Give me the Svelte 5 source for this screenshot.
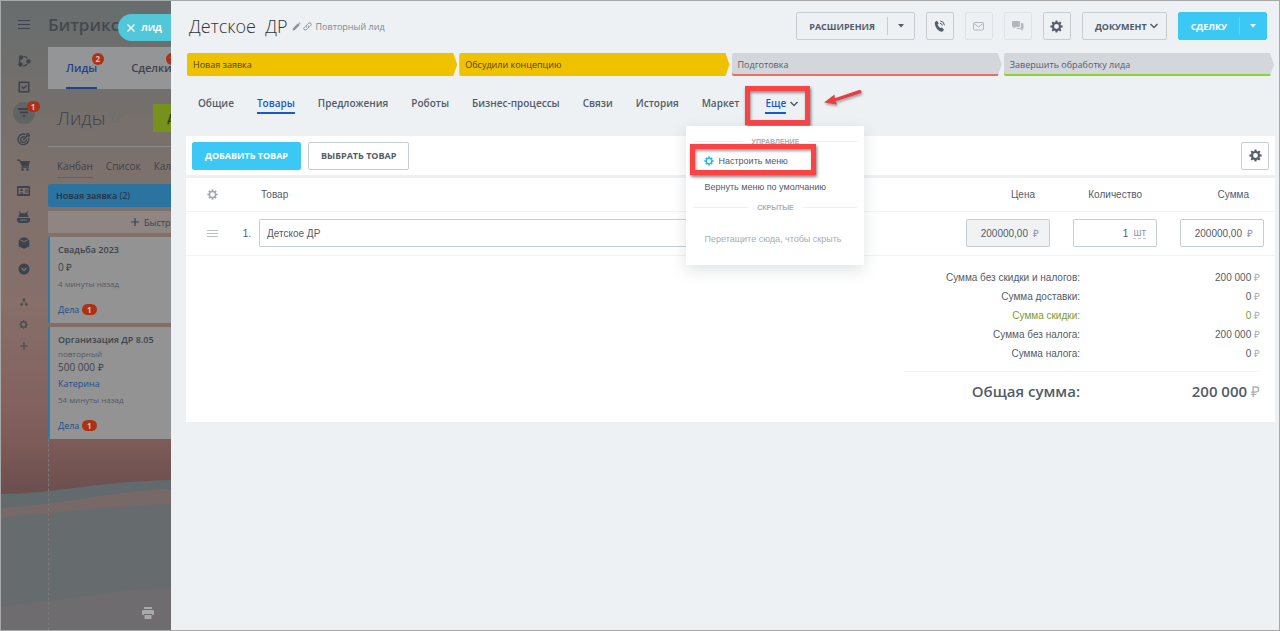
<script>
  const stages = [
    { name: 'Новая заявка', kind: 'done' },
    { name: 'Обсудили концепцию', kind: 'done' },
    { name: 'Подготовка', kind: 'fail' },
    { name: 'Завершить обработку лида', kind: 'success' }
  ];

  const tabs = ['Общие', 'Товары', 'Предложения', 'Роботы', 'Бизнес-процессы', 'Связи', 'История', 'Маркет'];
  let activeTab = $state('Товары');
  let menuOpen = $state(true);

  const totals = [
    { label: 'Сумма без скидки и налогов:', value: '200 000' },
    { label: 'Сумма доставки:', value: '0' },
    { label: 'Сумма скидки:', value: '0', discount: true },
    { label: 'Сумма без налога:', value: '200 000' },
    { label: 'Сумма налога:', value: '0' }
  ];

  let product = $state({ name: 'Детское ДР', price: '200000,00', quantity: '1', sum: '200000,00' });

  const teeth = [0, 45, 90, 135, 180, 225, 270, 315];
</script>

{#snippet gear(size, hole = 3)}
  <svg width={size} height={size} viewBox="0 0 16 16" fill="currentColor" aria-hidden="true">
    <path fill-rule="evenodd" d="M8 2.5a5.500 5.500 0 1 0 0 11a5.500 5.500 0 1 0 0-11zM8 {8 - hole}a{hole} {hole} 0 1 1 0 {hole * 2}a{hole} {hole} 0 1 1 0-{hole * 2}z" />
    {#each teeth as angle}
      <path d="M6.400 3.500L6.900 .5h2.200l.5 3z" transform="rotate({angle} 8 8)" />
    {/each}
  </svg>
{/snippet}

{#snippet chevron()}
  <svg width="10" height="8" viewBox="0 0 10 8" fill="none" stroke="currentColor" stroke-width="1.500" aria-hidden="true">
    <path d="M1.500 2L5 5.500L8.500 2" />
  </svg>
{/snippet}

{#snippet caret()}
  <svg width="6" height="4" viewBox="0 0 6 4" fill="currentColor" aria-hidden="true"><path d="M0 0h6L3 3.500z" /></svg>
{/snippet}

<div class="page">
  <aside class="behind">
    <svg class="dunes" viewBox="0 0 170 160" preserveAspectRatio="none" aria-hidden="true">
      <path fill="#626a6d" d="M0 24C50 24 100 11 170 10V160H0z" />
      <path fill="#776967" d="M0 38C60 35 110 21 170 19V42C110 42 60 43 0 48z" />
      <path fill="#666b6e" d="M0 48C50 43 100 37 170 34V160H0z" />
      <path fill="#6e6c6f" d="M0 137C60 130 110 121 170 117V160H0z" />
    </svg>

    <nav class="rail" aria-label="Главное меню">
      <button class="rail-item burger" aria-label="Меню">
        <svg width="14" height="12" viewBox="0 0 14 12" stroke="currentColor"><path d="M1 1.500h12M1 5.500h12M1 9.500h12" /></svg>
      </button>
      <button class="rail-item" aria-label="Совместная работа">
        <svg width="14" height="14" viewBox="0 0 14 14" fill="currentColor">
          <circle cx="4" cy="3.500" r="2.200" /><circle cx="3.500" cy="10.500" r="2.200" /><circle cx="11.500" cy="7.500" r="2.200" />
          <path fill="none" stroke="currentColor" stroke-width="1.200" d="M6.500 2.500Q9 2.300 10.500 4.500M2.500 5v4M6 12Q8.500 12 10.300 10" />
        </svg>
      </button>
      <button class="rail-item" aria-label="Задачи">
        <svg width="12" height="12" viewBox="0 0 12 12" fill="none" stroke="currentColor" stroke-width="1.600"><rect x="1.300" y="1.300" width="9.400" height="9.400" /><path d="M3.800 5.500l1.900 1.900l2.900-3.100" stroke-width="1.400" /></svg>
      </button>
      <button class="rail-item current" aria-label="CRM">
        <svg width="12" height="10" viewBox="0 0 12 10" fill="currentColor"><path d="M0 0h12v2H0zM2 3.500h8v2H2zM4 7h4L6 9.500z" /></svg>
        <span class="badge rail-badge">1</span>
      </button>
      <button class="rail-item" aria-label="Маркетинг">
        <svg width="13" height="13" viewBox="0 0 13 13" fill="none" stroke="currentColor" stroke-width="1.400"><path d="M8.500 1.500A5.300 5.300 0 1 0 11.500 5M7.500 4A2.800 2.800 0 1 0 9.200 6M6 7l4-4M10 3V1l2-.5M10 3h2l1-1.500" /></svg>
      </button>
      <button class="rail-item" aria-label="Магазин">
        <svg width="14" height="12" viewBox="0 0 14 12" fill="currentColor"><path d="M0 .5h3L3.600 2H13l-1.500 5.500H5L2.200 1.700H0z" /><path d="M4.500 7.500h7.500v1.200H4z" /><circle cx="5.500" cy="10.500" r="1.300" /><circle cx="10.500" cy="10.500" r="1.300" /></svg>
      </button>
      <button class="rail-item" aria-label="Контакты">
        <svg width="13" height="10" viewBox="0 0 13 10"><path fill="currentColor" fill-rule="evenodd" d="M1 0h11q1 0 1 1v8q0 1-1 1H1q-1 0-1-1V1q0-1 1-1zM1.500 2v6h10V2z" /><g fill="currentColor"><circle cx="4.500" cy="4" r="1.300" /><path d="M2.500 7.500Q4.500 4.500 6.500 7.500zM8 3.500h3v1H8zM8 5.500h3v1H8z" /></g></svg>
      </button>
      <button class="rail-item" aria-label="Роботы">
        <svg width="13" height="12" viewBox="0 0 13 12"><path fill="currentColor" fill-rule="evenodd" d="M2.500 0l1.500 2.200h5L10.500 0l.5.5L10.200 3Q11.500 4 11.500 6h-10Q1.500 4 2.800 3L2 .5zM0 7h13v2.500Q12 12 10 12H3Q1 12 0 9.500zM3 8.500v1h7v-1z" /></svg>
      </button>
      <button class="rail-item" aria-label="Склад">
        <svg width="12" height="12" viewBox="0 0 12 12" fill="currentColor"><path d="M6 0l5 2l-5 2l-5-2zM.7 2.800L6 5l5.300-2.200v6.700L6 11.700L.7 9.500z" /></svg>
      </button>
      <button class="rail-item" aria-label="Ещё разделы">
        <svg width="12" height="12" viewBox="0 0 12 12"><circle cx="6" cy="6" r="5.500" fill="currentColor" /><path d="M3.500 5L6 7.500L8.500 5" fill="none" stroke="#7b6f6d" stroke-width="1.500" /></svg>
      </button>
      <button class="rail-item small first" aria-label="Карта сайта">
        <svg width="8" height="8" viewBox="0 0 8 8" fill="currentColor"><circle cx="4" cy="1.500" r="1.300" /><circle cx="1.500" cy="6.500" r="1.300" /><circle cx="6.500" cy="6.500" r="1.300" /><path stroke="currentColor" stroke-width=".7" d="M4 2L2 6M4 2l2 4" /></svg>
      </button>
      <button class="rail-item small" aria-label="Настройки">{@render gear(9, 3.6)}</button>
      <button class="rail-item small" aria-label="Добавить">
        <svg width="8" height="8" viewBox="0 0 8 8" stroke="currentColor" stroke-width="1.200"><path d="M4 0v8M0 4h8" /></svg>
      </button>
    </nav>

    <div class="board">
      <div class="brand">Битрикс</div>
      <div class="sections">
        <a class="section active" href="#leads">Лиды<span class="badge count">2</span></a>
        <a class="section" href="#deals">Сделки<span class="badge count">1</span></a>
      </div>
      <div class="board-head">
        <h2>Лиды</h2>
        <svg width="13" height="13" viewBox="0 0 13 13" fill="none" stroke="#6b6e70"><path d="M6.500 1l1.700 3.600l3.900.5l-2.900 2.700l.7 3.900l-3.400-1.900l-3.400 1.900l.7-3.900L.9 5.100l3.900-.5z" /></svg>
        <button class="add">Добавить</button>
      </div>
      <div class="views">
        <a class="current-view" href="#kanban">Канбан</a>
        <a href="#list">Список</a>
        <a href="#calendar">Календарь</a>
      </div>
      <div class="column-title"><b>Новая заявка</b> (2)</div>
      <button class="quick"><svg width="8" height="8" viewBox="0 0 8 8" stroke="currentColor" stroke-width="1.200"><path d="M4 0v8M0 4h8" /></svg>Быстрый лид</button>
      <article class="lead">
        <strong>Свадьба 2023</strong>
        <span>0 ₽</span>
        <small>4 минуты назад</small>
        <a class="todo" href="#todo1">Дела <span class="badge">1</span></a>
      </article>
      <article class="lead">
        <strong>Организация ДР 8.05</strong>
        <small class="tight">повторный</small>
        <span>500 000 ₽</span>
        <a href="#client">Катерина</a>
        <small>54 минуты назад</small>
        <a class="todo" href="#todo2">Дела <span class="badge">1</span></a>
      </article>
      <div class="column-rest"></div>
    </div>

    <button class="close-pill">
      <svg width="8" height="8" viewBox="0 0 8 8" stroke="currentColor" stroke-width="1.200"><path d="M.5 .5l7 7M7.500 .5l-7 7" /></svg>
      лид
    </button>
    <button class="print" aria-label="Печать">
      <svg width="12" height="12" viewBox="0 0 12 12" fill="currentColor"><path fill-rule="evenodd" d="M2 0h8v2H2zM1 3h10q1 0 1 1v4h-2V7H2v1H0V4q0-1 1-1zM2.500 8h7v4h-7z" /></svg>
    </button>
  </aside>

  <main class="slider">
    <header class="head">
      <h1>Детское &nbsp;ДР</h1>
      <svg width="9" height="9" viewBox="0 0 9 9" fill="#8b929b"><path d="M.5 8.500l.6-2.300L6 1.300L7.700 3L2.800 7.900zM6.500 .8L7 .3L8.700 2l-.5.5z" /></svg>
      <svg width="9" height="9" viewBox="0 0 9 9" fill="none" stroke="#8b929b"><path d="M3.500 5.500Q2.500 4 4 2.800L5.500 1.300Q7 .3 8 1.500Q8.800 2.800 7.500 3.800L6.500 4.800M5.500 3.500Q6.500 5 5 6.200L3.700 7.500Q2.200 8.600 1.100 7.500Q.2 6.300 1.500 5.200L2.500 4.200" /></svg>
      <span class="repeat">Повторный лид</span>

      <div class="actions">
        <div class="split">
          <button class="label">Расширения</button><button class="more" aria-label="Ещё расширения">{@render caret()}</button>
        </div>
        <button class="icon" aria-label="Позвонить">
          <svg width="12" height="12" viewBox="0 0 12 12"><path fill="currentColor" d="M1 2L3 .8L4.700 3.300L3.600 4.600Q4.300 6.700 6.300 8L7.900 7.500L10 9.700L8.500 11.500Q5.800 12.200 3 9Q.3 5.500 1 2z" /><path fill="none" stroke="currentColor" d="M6 3.300Q8 3.300 8.300 5.500M6.300 1Q10 1.300 10.500 5.300" /></svg>
        </button>
        <button class="icon off" aria-label="Написать письмо" disabled>
          <svg width="11" height="9" viewBox="0 0 11 9" fill="none" stroke="currentColor"><rect x=".5" y=".5" width="10" height="7.500" rx="1" /><path d="M1 1.500l4.500 3.500L10 1.500" /></svg>
        </button>
        <button class="icon off" aria-label="Чат" disabled>
          <svg width="12" height="11" viewBox="0 0 12 11" fill="currentColor"><path d="M1 0h6q1 0 1 1v4q0 1-1 1H3.500L1.500 8V6H1Q0 6 0 5V1q0-1 1-1z" /><path d="M9 2h1q1.500 0 1.500 1.500V7q0 1-1 1v2L8.500 8H5.500Q4.500 8 4.500 7H8q1 0 1-1z" /></svg>
        </button>
        <button class="icon" aria-label="Настройки">{@render gear(13)}</button>
        <button class="document">Документ {@render chevron()}</button>
        <div class="split primary">
          <button class="label">Сделку</button><button class="more" aria-label="Другие варианты">{@render caret()}</button>
        </div>
      </div>
    </header>

    <div class="stages">
      {#each stages as stage}
        <button class="stage {stage.kind}">{stage.name}</button>
      {/each}
    </div>

    <nav class="tabs">
      {#each tabs as tab}
        <button class="tab" class:active={tab === activeTab} onclick={() => (activeTab = tab)}>{tab}</button>
      {/each}
      <div class="extra">
        <button class="tab active" aria-expanded={menuOpen} onclick={() => (menuOpen = !menuOpen)}>Еще</button>
        {@render chevron()}
        <span class="frame frame-tab"></span>
        <svg class="arrow" width="46" height="26" viewBox="0 0 46 26" aria-hidden="true">
          <path fill="#e53f40" d="M3 16.500L13.500 8.500L13.800 12.200L38 4Q40.500 3.500 40.500 6Q40.500 7 39 7.600L14.600 15.300L16 18.500z" />
        </svg>
        {#if menuOpen}
          <div class="menu">
            <div class="group">Управление</div>
            <button class="menu-item">{@render gear(10, 3.4)}Настроить меню<span class="frame frame-item"></span></button>
            <button class="menu-item">Вернуть меню по умолчанию</button>
            <div class="group">Скрытые</div>
            <p class="drop">Перетащите сюда, чтобы скрыть</p>
          </div>
        {/if}
      </div>
    </nav>

    <section class="card">
      <div class="toolbar">
        <button class="add-product">Добавить товар</button>
        <button class="pick-product">Выбрать товар</button>
        <button class="icon settings" aria-label="Настройки таблицы">{@render gear(13)}</button>
      </div>

      <table class="products">
        <thead>
          <tr>
            <th class="handle">{@render gear(11, 3.4)}</th>
            <th class="num"></th>
            <th class="name">Товар</th>
            <th class="money">Цена</th>
            <th class="money">Количество</th>
            <th class="money">Сумма</th>
          </tr>
        </thead>
        <tbody>
          <tr>
            <td class="handle"><svg width="11" height="9" viewBox="0 0 11 9" stroke="#b9bec4"><path d="M0 1.500h11M0 4.500h11M0 7.500h11" /></svg></td>
            <td class="num">1.</td>
            <td class="name"><input class="product" type="text" aria-label="Товар" bind:value={product.name} /></td>
            <td class="money"><label class="field locked"><input type="text" aria-label="Цена" readonly bind:value={product.price} /><span>₽</span></label></td>
            <td class="money"><label class="field"><input type="text" aria-label="Количество" bind:value={product.quantity} /><span class="unit">шт</span></label></td>
            <td class="money"><label class="field"><input type="text" aria-label="Сумма" bind:value={product.sum} /><span>₽</span></label></td>
          </tr>
        </tbody>
      </table>

      <table class="totals">
        <tbody>
          {#each totals as row}
            <tr class:discount={row.discount}>
              <th scope="row">{row.label}</th>
              <td>{row.value} <i>₽</i></td>
            </tr>
          {/each}
        </tbody>
      </table>
      <table class="totals grand">
        <tbody>
          <tr>
            <th scope="row">Общая сумма:</th>
            <td>200 000 <i>₽</i></td>
          </tr>
        </tbody>
      </table>
    </section>
  </main>
</div>

<style>
  :global(body) {
    background: #edf1f4;
    font-family: 'Open Sans', sans-serif;
    font-size: 10px;
    color: #535c69;
  }
  .page, .page * {
    box-sizing: border-box;
  }
  button {
    font: inherit;
    color: inherit;
    background: none;
    border: 0;
    padding: 0;
    cursor: pointer;
    white-space: nowrap;
    text-transform: inherit;
  }
  a {
    text-decoration: none;
    color: inherit;
  }
  svg {
    flex: none;
    display: block;
  }
  .page {
    display: grid;
    grid-template-columns: 170px minmax(0, 1fr);
    min-height: 100vh;
    border: 1px solid #a6a8aa;
  }

  /* dimmed page under the slider */
  .behind {
    position: relative;
    display: flex;
    overflow: hidden;
    color: #3d434c;
    background: linear-gradient(#676d6e 0, #736f6c 90px, #7e716c 180px, #876f6a 300px, #83625f 400px, #7d5b58 440px, #6c4f4f 490px);
  }
  .dunes {
    position: absolute;
    left: 0;
    bottom: 0;
    width: 100%;
    height: 160px;
  }
  .rail {
    position: relative;
    flex: none;
    width: 47px;
    display: flex;
    flex-direction: column;
    align-items: center;
    padding: 11px 2px 0 0;
  }
  .rail-item {
    flex: none;
    width: 22px;
    height: 22px;
    margin-bottom: 4px;
    display: flex;
    align-items: center;
    justify-content: center;
    position: relative;
    border-radius: 50%;
  }
  .rail-item.burger {
    height: 26px;
    margin-bottom: 12px;
  }
  .rail-item.current {
    background: #626364;
  }
  .rail-item.small {
    color: #4b4a4e;
    margin-bottom: 0;
  }
  .rail-item.first {
    margin-top: 7px;
  }
  .badge {
    display: inline-block;
    min-width: 15px;
    height: 11px;
    padding: 0 4px;
    border-radius: 6px;
    background: #ae3015;
    color: #c9c2c0;
    font-size: 8px;
    font-weight: 700;
    line-height: 11px;
    text-align: center;
  }
  .rail-badge {
    position: absolute;
    top: -1px;
    left: 14px;
    min-width: 13px;
  }
  .board {
    position: relative;
    flex: none;
    width: 320px;
    display: flex;
    flex-direction: column;
  }
  .brand {
    height: 46px;
    line-height: 48px;
    font-size: 17px;
    font-weight: 600;
    color: #44494e;
  }
  .sections {
    display: flex;
    gap: 34px;
    height: 42px;
    padding-left: 18px;
    background: #949596;
    font-size: 11px;
    font-weight: 600;
  }
  .section {
    position: relative;
    line-height: 42px;
  }
  .section.active {
    color: #1d4486;
    box-shadow: inset 0 -2px #1d4486;
  }
  .count {
    position: absolute;
    top: 6px;
    right: -7px;
    height: 12px;
    line-height: 12px;
    min-width: 12px;
  }
  .board-head {
    display: flex;
    align-items: center;
    gap: 4px;
    height: 58px;
    padding-left: 9px;
    border-bottom: 1px solid #8b8c8d;
  }
  h2 {
    margin: 0;
    font-size: 19px;
    font-weight: 300;
  }
  .add {
    height: 28px;
    margin-left: 27px;
    padding: 0 14px;
    background: #76921a;
    color: #34390f;
    font-weight: 700;
    font-size: 10px;
    text-transform: uppercase;
  }
  .views {
    display: flex;
    gap: 13px;
    height: 37px;
    padding: 9px 9px 6px;
    line-height: 20px;
  }
  .current-view {
    border-bottom: 1px solid #62605f;
  }
  .column-title {
    height: 23px;
    padding-left: 8px;
    border-radius: 2px;
    background: #2b73a0;
    line-height: 23px;
    font-size: 9px;
    color: #27323c;
  }
  .column-title b {
    font-weight: 600;
  }
  .quick {
    display: flex;
    align-items: center;
    gap: 5px;
    height: 22px;
    margin: 4px 0;
    padding-left: 83px;
    background: #8f8583;
    font-size: 9px;
  }
  .lead {
    display: flex;
    flex-direction: column;
    margin-bottom: 4px;
    padding: 3px 8px 5px;
    border-left: 2px solid #3278a5;
    background: #949393;
    line-height: 17px;
  }
  .lead strong {
    font-size: 9px;
    font-weight: 600;
    line-height: 19px;
  }
  .lead small {
    font-size: 8px;
    line-height: 15px;
    color: #55595f;
  }
  .lead .tight {
    line-height: 10px;
  }
  .lead a {
    font-size: 9px;
    color: #204f88;
    line-height: 16px;
  }
  .lead .todo {
    margin-top: 11px;
  }
  .column-rest {
    flex: 1;
    margin-top: -4px;
    border-left: 1px dashed #7d7778;
  }
  .close-pill {
    position: absolute;
    top: 13px;
    right: 0;
    display: flex;
    align-items: center;
    gap: 6px;
    height: 27px;
    padding: 0 9px;
    border-radius: 14px 0 0 14px;
    background: #51c7d8;
    color: #fff;
    font-size: 9px;
    font-weight: 700;
    text-transform: uppercase;
  }
  .print {
    position: absolute;
    right: 17px;
    bottom: 11px;
    color: #a8a9ab;
  }

  /* slider */
  .slider {
    min-width: 0;
    padding: 0 4px 16px 15px;
    background: #edf1f4;
  }
  .head {
    display: flex;
    align-items: center;
    gap: 2px;
    height: 50px;
    padding: 0 8px 0 3px;
  }
  h1 {
    margin: 0 2px 0 0;
    font-size: 18px;
    font-weight: 300;
    color: #333;
    white-space: nowrap;
  }
  .repeat {
    margin-left: 2px;
    font-size: 9px;
    color: #80868e;
    white-space: nowrap;
  }
  .actions {
    display: flex;
    align-items: center;
    gap: 11px;
    margin-left: auto;
    font-size: 9px;
    font-weight: 700;
    text-transform: uppercase;
  }
  .split,
  .document,
  .icon {
    display: flex;
    align-items: center;
    justify-content: center;
    height: 28px;
    border: 1px solid #c6cdd3;
    border-radius: 2px;
  }
  .split .label {
    padding: 0 12px;
  }
  .split .more {
    display: flex;
    align-items: center;
    justify-content: center;
    width: 27px;
    height: 18px;
    border-left: 1px solid #c6cdd3;
  }
  .split.primary {
    background: #3bc8f5;
    border-color: #3bc8f5;
    color: #fff;
  }
  .primary .more {
    border-color: #64d3f7;
  }
  .icon {
    width: 28px;
  }
  .icon.off {
    color: #b3b8be;
    border-color: #dfe3e7;
  }
  .document {
    gap: 2px;
    padding: 0 7px 0 12px;
  }
  .stages {
    display: grid;
    grid-template-columns: repeat(4, minmax(0, 1fr));
    gap: 2px;
    margin: 2px 1px 0 1px;
  }
  .stage {
    height: 23px;
    padding: 0 6px;
    text-align: left;
    font-size: 9px;
    font-weight: 500;
    border-radius: 2px;
    background: #d3d7dc;
    clip-path: polygon(0 0, calc(100% - 4px) 0, 100% 50%, calc(100% - 4px) 100%, 0 100%);
  }
  .stage.done {
    background: #efc200;
    color: #4a4322;
  }
  .stage.fail {
    box-shadow: inset 0 -2px #f26b62;
  }
  .stage.success {
    box-shadow: inset 0 -2px #90d133;
  }
  .tabs {
    display: flex;
    gap: 23px;
    height: 60px;
    padding: 18px 12px 0;
    font-weight: 600;
  }
  .tab {
    height: 20px;
    border-bottom: 2px solid transparent;
    line-height: 18px;
  }
  .tab.active {
    color: #1858d0;
    border-color: #1858d0;
  }
  .extra {
    position: relative;
    display: flex;
    align-items: center;
    gap: 3px;
    height: 20px;
    margin-left: 3px;
  }
  .frame {
    position: absolute;
    border: 5px solid #f94445;
    box-shadow: 1px 2px 3px rgba(0, 0, 0, 0.5), inset 1px 2px 3px rgba(0, 0, 0, 0.4);
    pointer-events: none;
  }
  .frame-tab {
    inset: -8px -11px -11px -20px;
  }
  .arrow {
    position: absolute;
    left: 56px;
    top: -8px;
    filter: drop-shadow(1px 2px 1px rgba(0, 0, 0, 0.3));
  }
  .menu {
    position: absolute;
    z-index: 2;
    top: 32px;
    left: -79px;
    width: 178px;
    padding: 8px 7px 15px;
    background: #fff;
    box-shadow: 0 5px 14px rgba(83, 92, 105, 0.18);
    font-family: 'Liberation Sans', Arial, sans-serif;
    font-size: 9px;
    font-weight: 400;
  }
  .group {
    display: flex;
    align-items: center;
    gap: 9px;
    height: 14px;
    color: #a9b0b8;
    font-size: 7px;
    font-weight: 700;
    text-transform: uppercase;
  }
  .group::before,
  .group::after {
    content: '';
    flex: 1;
    height: 1px;
    background: #edf0f2;
  }
  .menu-item {
    position: relative;
    display: flex;
    align-items: center;
    gap: 4px;
    width: 100%;
    height: 26px;
    padding-left: 11px;
  }
  .menu-item :global(svg) {
    color: #2bb9ea;
  }
  .frame-item {
    inset: -4px 41px -1px -3px;
  }
  .drop {
    margin: 14px 0 0;
    padding-left: 11px;
    height: 22px;
    line-height: 22px;
    white-space: nowrap;
    color: #a8adb4;
  }

  .card {
    background: #fff;
  }
  .toolbar {
    display: flex;
    align-items: center;
    gap: 7px;
    height: 42px;
    padding: 0 6px;
    border-bottom: 3px solid #edf1f4;
    font-size: 9px;
    font-weight: 700;
  }
  .add-product,
  .pick-product {
    height: 28px;
    padding: 0 12px;
    border: 1px solid #c6cdd3;
    border-radius: 2px;
    text-transform: uppercase;
  }
  .add-product {
    background: #3bc8f5;
    border-color: #3bc8f5;
    color: #fff;
  }
  .settings {
    margin-left: auto;
  }
  table {
    border-collapse: collapse;
    font-family: 'Liberation Sans', Arial, sans-serif;
  }
  th {
    font-weight: 400;
  }
  .products {
    width: 100%;
    table-layout: fixed;
  }
  .products tr {
    border-bottom: 1px solid #f1f3f5;
  }
  .products th,
  .products td {
    height: 33px;
    padding: 0;
    text-align: left;
  }
  .products td {
    height: 44px;
  }
  .products .handle {
    width: 53px;
    color: #a3a8ae;
  }
  .handle :global(svg) {
    margin: 0 auto;
  }
  .products .num {
    width: 20px;
    padding-right: 8px;
    text-align: right;
  }
  .products th.name {
    padding-left: 2px;
  }
  .products .money {
    width: 107px;
    padding-right: 11px;
    text-align: right;
  }
  .products th.money {
    padding-right: 26px;
  }
  input {
    font: inherit;
    color: inherit;
    background: none;
    border: 0;
    outline: 0;
    padding: 0;
    min-width: 0;
  }
  .product {
    display: block;
    width: 80%;
    height: 28px;
    padding: 0 7px;
    border: 1px solid #c6cdd3;
    border-radius: 1px;
  }
  .field {
    display: flex;
    align-items: center;
    gap: 5px;
    width: 84px;
    height: 28px;
    margin-left: auto;
    padding: 0 10px;
    border: 1px solid #c6cdd3;
    border-radius: 2px;
  }
  .field input {
    flex: 1;
    width: 0;
    text-align: right;
  }
  .field.locked {
    background: #f1f2f3;
  }
  .field span {
    color: #8f959d;
  }
  .field .unit {
    border-bottom: 1px dashed #c6cdd3;
  }
  .totals {
    width: 356px;
    margin: 12px 15px 0 auto;
  }
  .totals th,
  .totals td {
    height: 19px;
    padding: 0;
    text-align: right;
  }
  .totals td {
    width: 180px;
  }
  .totals i {
    font-style: normal;
    color: #a9afb6;
  }
  .totals .discount {
    color: #7d9a35;
  }
  .grand {
    margin-top: 8px;
    border-top: 1px solid #f0f2f4;
    font-family: 'Open Sans', sans-serif;
    font-size: 15px;
  }
  .grand th,
  .grand td {
    height: 51px;
    padding-bottom: 12px;
    font-weight: 600;
  }
  .grand i {
    font-weight: 400;
  }
</style>
